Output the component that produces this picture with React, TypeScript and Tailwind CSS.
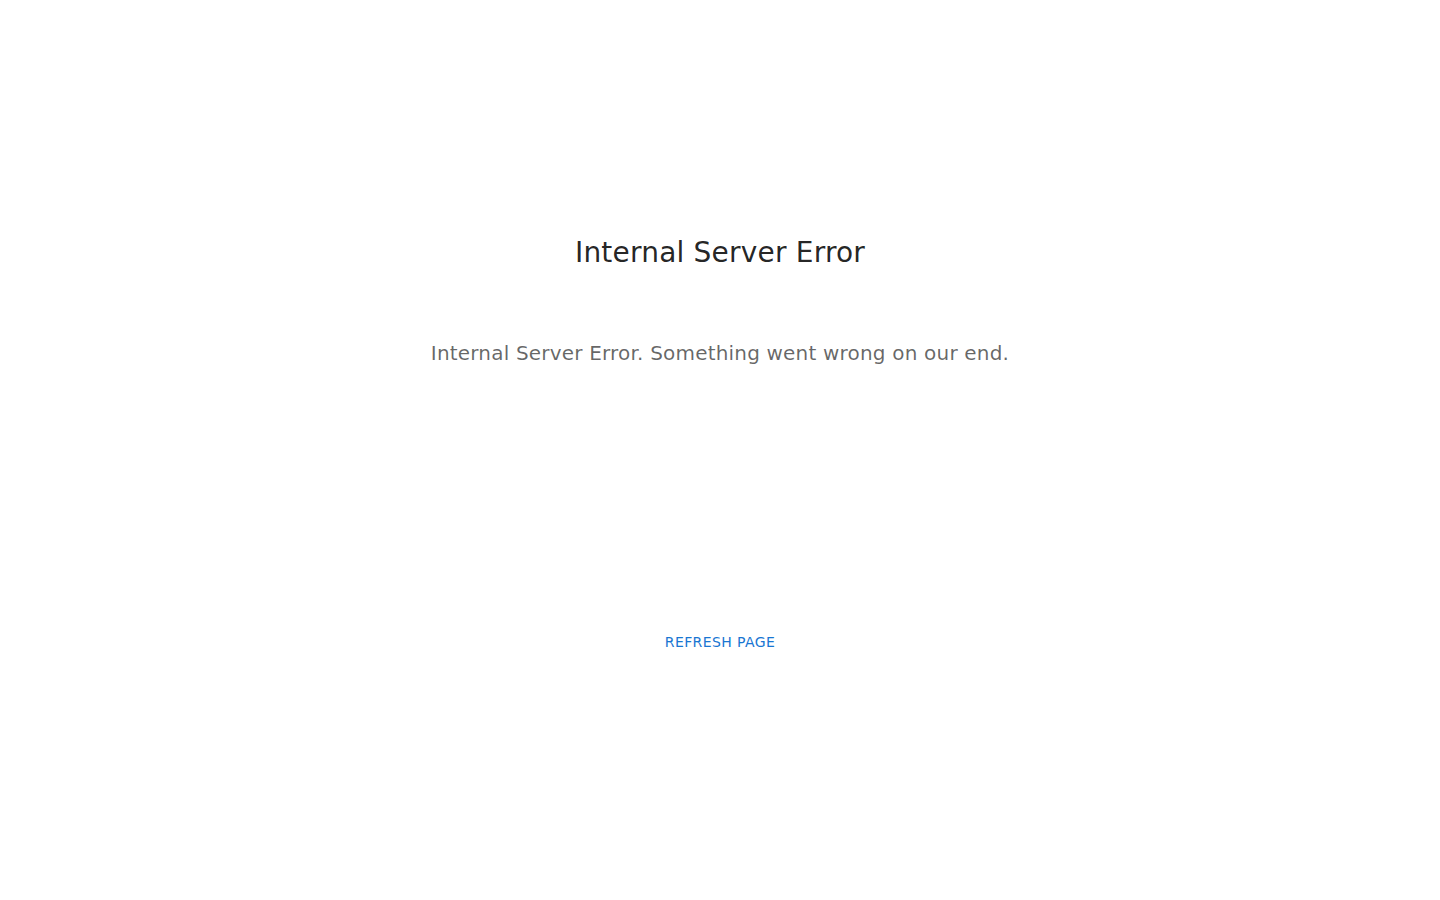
export default function App() {
  return (
    <div className="min-h-[900px] w-full bg-white flex flex-col items-center" style={{ fontFamily: '"DejaVu Sans", sans-serif' }}>
      <h1 className="mt-[235px] text-[28px] leading-[36px] tracking-[0.00735em] text-[rgba(0,0,0,0.87)] font-normal">Internal Server Error</h1>
      <p className="mt-[66px] text-[20px] leading-[32px] tracking-[0.00938em] text-[rgba(0,0,0,0.6)]">Internal Server Error. Something went wrong on our end.</p>
      <button className="mt-[255px] px-2 py-1.5 text-[14px] leading-[24px] tracking-[0.02857em] uppercase text-[#1976d2] rounded">Refresh Page</button>
    </div>
  );
}
